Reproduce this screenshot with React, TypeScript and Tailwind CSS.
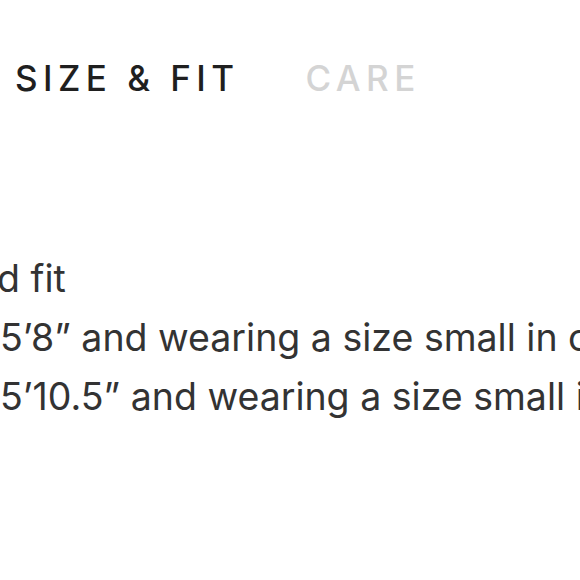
import React from 'react';

const lines = [
  { hidden: 'Relaxe', shown: 'd fit', shift: 'ml-[-3px]' },
  { hidden: 'Model is ', shown: '5’8” and wearing a size small in color', shift: '' },
  { hidden: 'Model is ', shown: '5’10.5” and wearing a size small in color', shift: '' },
];

export default function App() {
  return (
    <div className="w-[580px] h-[580px] overflow-hidden bg-white font-['Inter',sans-serif]">
      <div className="flex items-baseline gap-[66px] pl-[15px] pt-[56px] text-[35px] leading-[44px] font-medium tracking-[0.155em] whitespace-nowrap">
        <span className="text-[#1f1f1f]">SIZE &amp; FIT</span>
        <span className="text-[#d4d4d4]">CARE</span>
      </div>
      <div className="mt-[149px] text-[37.5px] leading-[59px] text-[#333] whitespace-nowrap">
        {lines.map((l, i) => (
          <div key={i} className={`flex ${l.shift}`}>
            <span className="ml-[-300px] w-[300px] shrink-0 text-right">{l.hidden}</span>
            <span>{l.shown}</span>
          </div>
        ))}
      </div>
    </div>
  );
}
